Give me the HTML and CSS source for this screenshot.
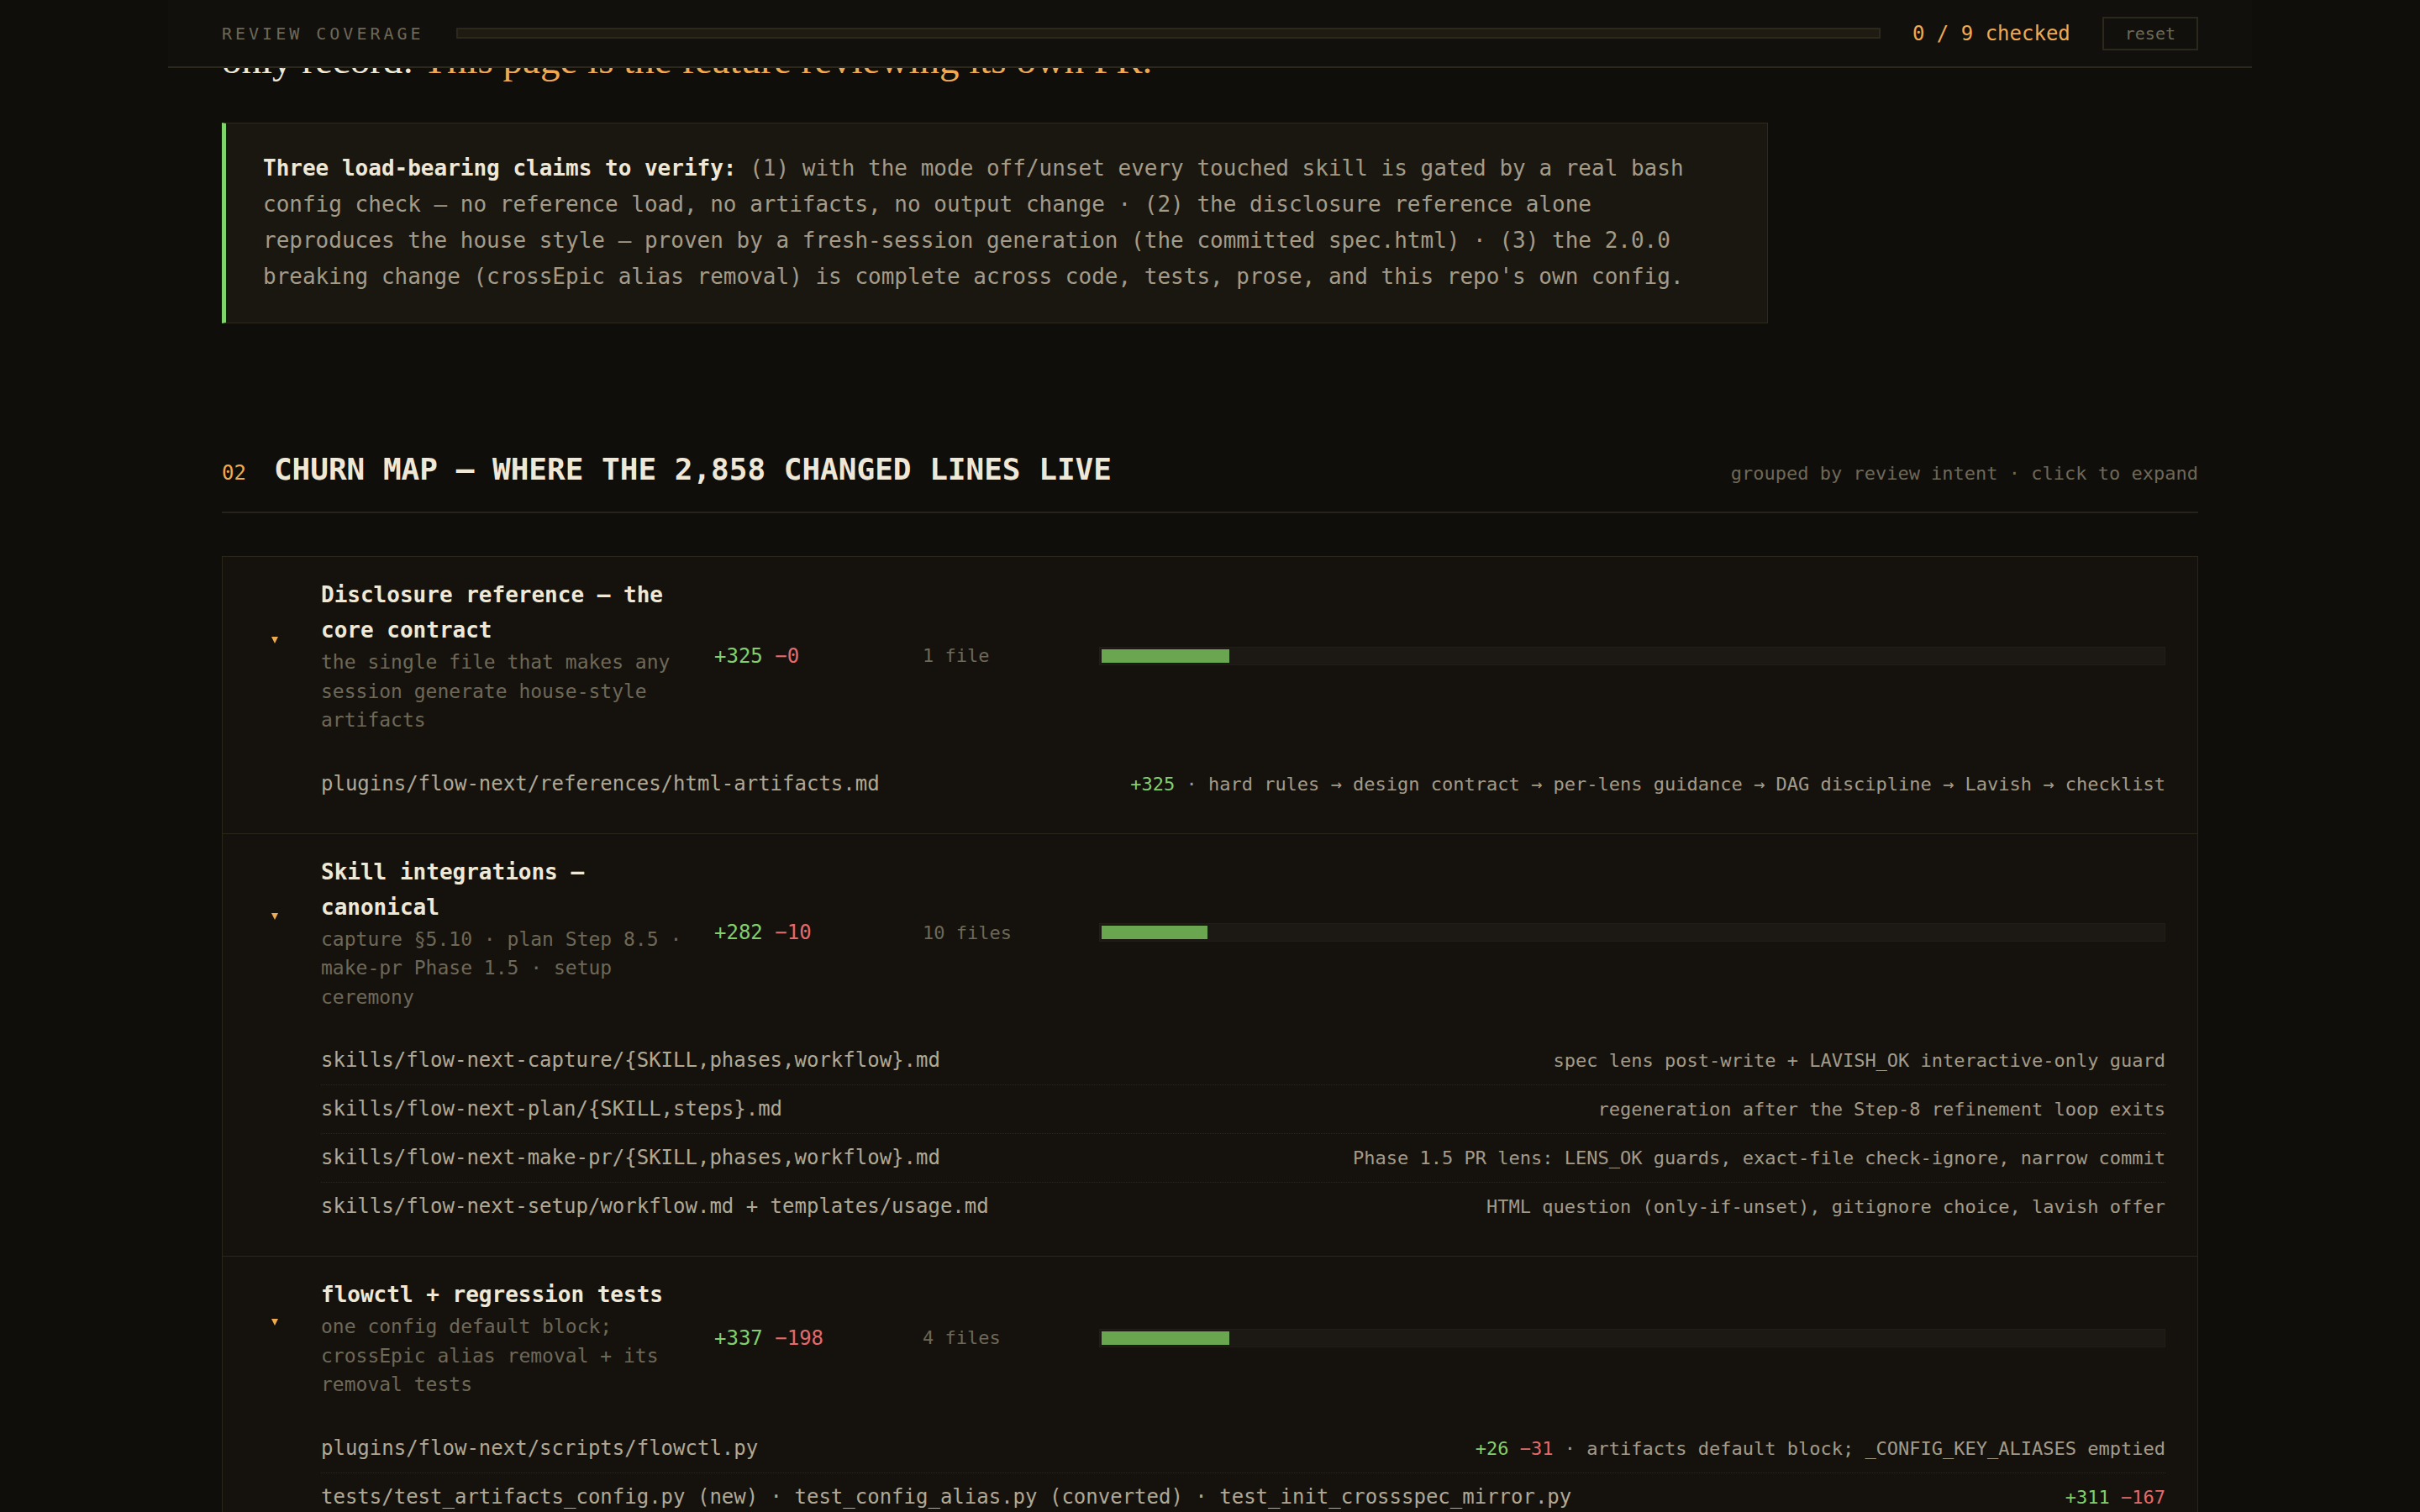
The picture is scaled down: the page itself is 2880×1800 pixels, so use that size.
FILE: index.html
```html
<!DOCTYPE html>
<html lang="en">
<head>
    <meta charset="UTF-8">
    <meta name="viewport" content="width=device-width, initial-scale=1.0">
    <title>flow-next 2.0.0 — PR review</title>
    <link rel="stylesheet" href="styles.css">
</head>
<body>
    <div id="page">
        <header id="coverage">
            <span class="coverage-label">REVIEW COVERAGE</span>
            <div class="coverage-track"><div class="coverage-fill"></div></div>
            <span class="coverage-count">0 / 9 checked</span>
            <button class="coverage-reset">reset</button>
        </header>

        <main>
            <p class="lede">only record: <span class="lede-accent">This page is the feature reviewing its own PR.</span></p>

            <div class="callout">
                <strong>Three load-bearing claims to verify:</strong> (1) with the mode off/unset every touched skill is gated by a real bash config check — no reference load, no artifacts, no output change · (2) the disclosure reference alone reproduces the house style — proven by a fresh-session generation (the committed spec.html) · (3) the 2.0.0 breaking change (crossEpic alias removal) is complete across code, tests, prose, and this repo's own config.
            </div>

            <section class="section">
                <div class="section-head">
                    <h2><span class="section-num">02</span>CHURN MAP — WHERE THE 2,858 CHANGED LINES LIVE</h2>
                    <span class="section-hint">grouped by review intent · click to expand</span>
                </div>

                <div class="churn">
                    <div class="group">
                        <div class="group-head">
                            <span class="caret"></span>
                            <div class="group-text">
                                <div class="group-title">Disclosure reference — the core contract</div>
                                <div class="group-desc">the single file that makes any session generate house-style artifacts</div>
                            </div>
                            <div class="stat"><span class="add">+325</span> <span class="del">−0</span></div>
                            <div class="count">1 file</div>
                            <div class="bar"><div class="bar-fill" style="width: 12%"></div></div>
                        </div>
                        <ul class="files">
                            <li><span class="path">plugins/flow-next/references/html-artifacts.md</span><span class="note"><span class="add">+325</span> · hard rules → design contract → per-lens guidance → DAG discipline → Lavish → checklist</span></li>
                        </ul>
                    </div>

                    <div class="group">
                        <div class="group-head">
                            <span class="caret"></span>
                            <div class="group-text">
                                <div class="group-title">Skill integrations — canonical</div>
                                <div class="group-desc">capture §5.10 · plan Step 8.5 · make-pr Phase 1.5 · setup ceremony</div>
                            </div>
                            <div class="stat"><span class="add">+282</span> <span class="del">−10</span></div>
                            <div class="count">10 files</div>
                            <div class="bar"><div class="bar-fill" style="width: 10%"></div></div>
                        </div>
                        <ul class="files">
                            <li><span class="path">skills/flow-next-capture/{SKILL,phases,workflow}.md</span><span class="note">spec lens post-write + LAVISH_OK interactive-only guard</span></li>
                            <li><span class="path">skills/flow-next-plan/{SKILL,steps}.md</span><span class="note">regeneration after the Step-8 refinement loop exits</span></li>
                            <li><span class="path">skills/flow-next-make-pr/{SKILL,phases,workflow}.md</span><span class="note">Phase 1.5 PR lens: LENS_OK guards, exact-file check-ignore, narrow commit</span></li>
                            <li><span class="path">skills/flow-next-setup/workflow.md + templates/usage.md</span><span class="note">HTML question (only-if-unset), gitignore choice, lavish offer</span></li>
                        </ul>
                    </div>

                    <div class="group">
                        <div class="group-head">
                            <span class="caret"></span>
                            <div class="group-text">
                                <div class="group-title">flowctl + regression tests</div>
                                <div class="group-desc">one config default block; crossEpic alias removal + its removal tests</div>
                            </div>
                            <div class="stat"><span class="add">+337</span> <span class="del">−198</span></div>
                            <div class="count">4 files</div>
                            <div class="bar"><div class="bar-fill" style="width: 12%"></div></div>
                        </div>
                        <ul class="files">
                            <li><span class="path">plugins/flow-next/scripts/flowctl.py</span><span class="note"><span class="add">+26</span> <span class="del">−31</span> · artifacts default block; _CONFIG_KEY_ALIASES emptied</span></li>
                            <li><span class="path">tests/test_artifacts_config.py (new) · test_config_alias.py (converted) · test_init_crossspec_mirror.py</span><span class="note"><span class="add">+311</span> <span class="del">−167</span></span></li>
                            <li><span class="path">tests/test_doc_prose.py</span><span class="note">prose pins for the new config keys</span></li>
                        </ul>
                    </div>
                </div>
            </section>
        </main>
    </div>
</body>
</html>
```

FILE: styles.css
```css
body {
    margin: 0;
    padding: 0;
    background-color: #100e0b;
    color: #a39b88;
    font-family: "DejaVu Sans Mono", "Liberation Mono", monospace;
}

#page {
    width: 2480px;
    margin: 0 auto;
}

/* sticky coverage bar */
#coverage {
    position: sticky;
    top: 0;
    z-index: 10;
    display: flex;
    align-items: center;
    gap: 38px;
    height: 79px;
    padding: 0 64px;
    background-color: #12100c;
    border-bottom: 2px solid #2c281c;
}

.coverage-label {
    font-size: 20px;
    letter-spacing: 4px;
    color: #6e6857;
}

.coverage-track {
    flex: 1;
    height: 9px;
    background-color: #1f1b13;
    border: 2px solid #2c281c;
}

.coverage-fill {
    width: 0;
    height: 100%;
    background-color: #eea951;
}

.coverage-count {
    font-size: 24px;
    color: #eea951;
}

.coverage-reset {
    height: 40px;
    padding: 0 25px;
    font-family: inherit;
    font-size: 20px;
    color: #6e6857;
    background: transparent;
    border: 2px solid #2c281c;
    cursor: pointer;
}

main {
    padding: 0 64px 80px;
}

.lede {
    margin: -40px 0 0;
    font-family: "Liberation Serif", serif;
    font-size: 47px;
    line-height: 60px;
    color: #efe8d6;
}

.lede-accent {
    color: #eea951;
}

.callout {
    max-width: 1746px;
    margin-top: 45px;
    padding: 32px 44px 33px;
    font-size: 26px;
    line-height: 43px;
    background-color: #1a1711;
    border: 1px solid #2e2a1d;
    border-left: 5px solid #7ed36a;
}

.callout strong {
    color: #efe8d6;
}

/* section 02 */
.section {
    margin-top: 152px;
}

.section-head {
    display: flex;
    align-items: baseline;
    justify-content: space-between;
    padding-bottom: 24px;
    border-bottom: 2px solid #27231a;
    margin-bottom: 51px;
}

h2 {
    margin: 0;
    font-size: 36px;
    line-height: 44px;
    font-weight: bold;
    color: #efe8d6;
}

.section-num {
    font-size: 24px;
    font-weight: normal;
    color: #eea951;
    margin-right: 33px;
}

.section-hint {
    font-size: 22px;
    color: #6e6857;
}

.churn {
    background-color: #15120e;
    border: 1px solid #2a2619;
}

.group + .group {
    border-top: 1px solid #2a2619;
}

.group-head {
    display: grid;
    grid-template-columns: 29px 440px 220px 182px 1fr;
    column-gap: 28px;
    align-items: center;
    padding: 24px 38px 24px 60px;
}

.caret {
    width: 0;
    height: 0;
    margin: 0 0 38px -2px;
    border-left: 4px solid transparent;
    border-right: 4px solid transparent;
    border-top: 8px solid #eea951;
}

.group-title {
    font-size: 26px;
    line-height: 42px;
    font-weight: bold;
    color: #efe8d6;
}

.group-desc {
    font-size: 23px;
    line-height: 34.5px;
    color: #6e6857;
}

.stat {
    font-size: 24px;
}

.add {
    color: #82cf6c;
}

.del {
    color: #e36b6b;
}

.count {
    font-size: 22px;
    color: #6e6857;
}

.bar {
    height: 16px;
    padding: 2px;
    background-color: #1c1914;
    border: 1px solid #211e17;
}

.bar-fill {
    height: 100%;
    background-color: #6aa650;
}

.files {
    list-style: none;
    margin: 0;
    padding: 6px 38px 30px 117px;
}

.files li {
    display: flex;
    justify-content: space-between;
    align-items: baseline;
    gap: 40px;
    padding: 14px 0;
    line-height: 29px;
}

.files li + li {
    border-top: 1px dotted #2a2619;
}

.path {
    font-size: 24px;
    color: #b0a894;
}

.note {
    font-size: 22px;
    color: #a39b88;
    text-align: right;
    white-space: nowrap;
}
```
